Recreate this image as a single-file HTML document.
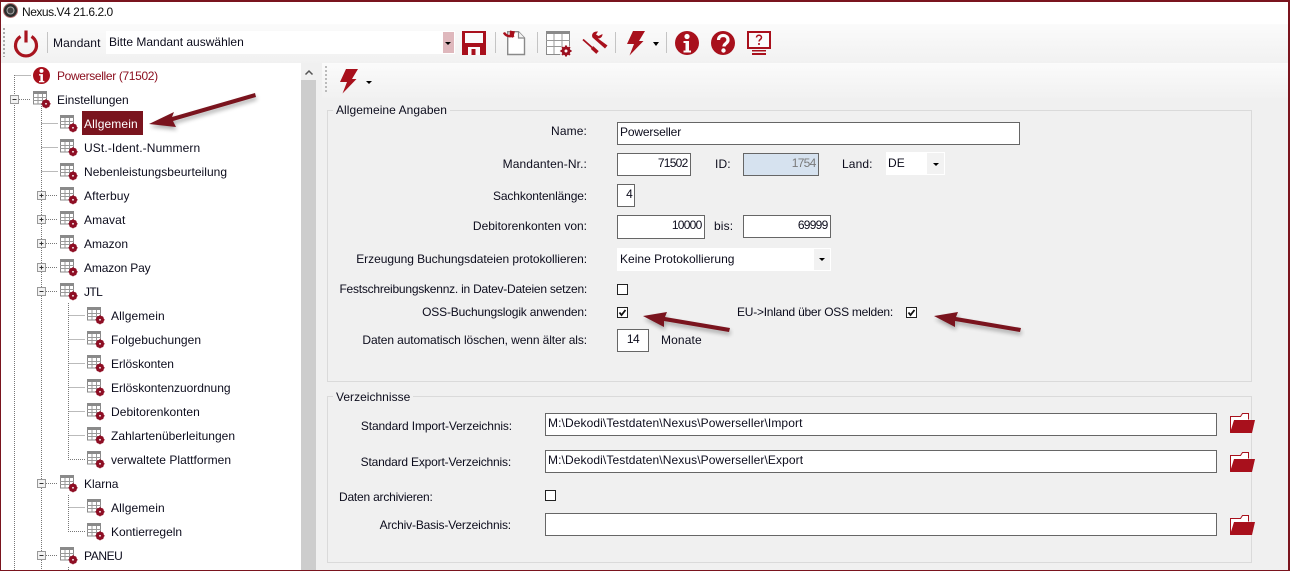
<!DOCTYPE html>
<html lang="de"><head><meta charset="utf-8"><title>Nexus.V4</title>
<style>
*{box-sizing:border-box}
html,body{margin:0;padding:0}
body{width:1290px;height:571px;overflow:hidden;position:relative;background:#f0f0f0;font:12px "Liberation Sans",sans-serif;color:#0c0c1c}
.a{position:absolute}
.t{position:absolute;white-space:nowrap;line-height:14px;height:14px;letter-spacing:.12px}
.r{text-align:right}
.i{position:absolute;background:#fff;border:1px solid #666;border-width:1.5px;line-height:19px;padding:0 2px;white-space:nowrap;letter-spacing:.1px}
.i.n{text-align:right;letter-spacing:-.75px;padding-right:2.500px}
.c{position:absolute;background:#fff}
.ck{position:absolute;width:11px;height:11px;background:#fff;border:1px solid #222}
.ar{position:absolute;width:0;height:0;border-left:3px solid transparent;border-right:3px solid transparent;border-top:3px solid #000}
.sep{position:absolute;width:1px;background:#c4c4c4;top:32px;height:21px}
.g{position:absolute;border:1px solid #dadada;left:327px;width:925px}
.l{position:absolute;background:#f0f0f0;padding:0 3px}
svg{position:absolute;overflow:visible}
</style></head><body>
<svg width="0" height="0" style="left:0;top:0"><defs>
<symbol id="tb" viewBox="0 0 18 18" overflow="visible">
<rect x="0.500" y="0.500" width="13" height="12.500" fill="#fff" stroke="#8a8a8a"/><path d="M0 .5h14v2.500H0z" fill="#8a8a8a"/><path d="M5 3v10M9.500 3v10M0 6.500h14M0 9.500h14" stroke="#999" fill="none"/><circle cx="13" cy="12.800" r="2.500" fill="#fff" stroke="#8e0e24" stroke-width="3.200"/><path d="M13 8.300v1.500M13 15.800v1.500M8.500 12.800h1.500M16 12.800h1.500M9.900 9.700l1 1M15.100 14.900l1 1M16.100 9.700l-1 1M10.900 14.900l-1 1" stroke="#8e0e24" stroke-width="1.500"/></symbol>
<symbol id="fo" viewBox="0 0 25 20"><path d="M.5 19.500V3.500h10l2-3h6v6" fill="#fff" stroke="#a8101c"/><path d="M4 7h21l-3 13H0z" fill="#a8101c"/></symbol>
<symbol id="bo" viewBox="0 0 18 25"><path d="M6 0H18L12 10H16.500L2.500 24.500L7 13H0Z" fill="#a8101c"/></symbol>
<filter id="sh" x="-20%" y="-50%" width="140%" height="200%"><feGaussianBlur stdDeviation="2"/></filter>
</defs></svg>

<!-- title -->
<div class="a" style="left:0;top:0;width:1290px;height:24px;background:#fff"></div>
<svg style="left:3px;top:3px" width="15" height="15" viewBox="0 0 15 15"><circle cx="7.500" cy="7.500" r="7" fill="#2c2c2c" stroke="#b77"/><circle cx="7.500" cy="7.500" r="3.500" fill="#444" stroke="#aaa"/></svg>
<div class="t" style="left:22px;top:5px;color:#111;letter-spacing:-.47px">Nexus.V4 21.6.2.0</div>

<!-- toolbar -->
<div class="a" style="left:0;top:24px;width:1290px;height:39px;background:linear-gradient(#fbfbfb,#f1f1f1)"></div>
<div class="a" style="left:3px;top:28px;width:2px;height:29px;background:repeating-linear-gradient(#aaa 0 2px,transparent 2px 4px)"></div>
<svg style="left:13px;top:30px" width="26" height="26" viewBox="0 0 26 26"><path d="M7.500 6.500a10.500 10.500 0 1 0 11 0" fill="none" stroke="#a8141f" stroke-width="3.200"/><path d="M13 .5v12" stroke="#a8141f" stroke-width="3.200" fill="none"/></svg>
<div class="sep" style="left:47px"></div>
<div class="t" style="left:53px;top:36px">Mandant</div>
<div class="c" style="left:106px;top:31px;width:349px;height:23px"></div>
<div class="t" style="left:109px;top:35px;letter-spacing:0">Bitte Mandant auswählen</div>
<div class="a" style="left:443px;top:32px;width:11px;height:21px;background:#dfb8bd"></div>
<div class="ar" style="left:445px;top:42px"></div>
<svg style="left:462px;top:31px" width="24" height="24" viewBox="0 0 24 24"><path d="M0 0h24v24H0z" fill="#a8101c"/><path d="M3 2h18v10H3z" fill="#fbfbfb"/><path d="M6 16h12v8H6z" fill="#fbfbfb"/><path d="M9.500 18h4v6h-4z" fill="#a8101c"/></svg>
<div class="sep" style="left:495px"></div>
<svg style="left:503px;top:30px" width="23" height="26" viewBox="0 0 23 26"><path d="M4.700 1.700H15.500L21.500 8V24.500H4.700Z" fill="#fff" stroke="#8a8a8a" stroke-width="1.400"/><path d="M15.500 1.700V8H21.500" fill="#f4f4f4" stroke="#8a8a8a" stroke-width="1.200"/><path d="M1 2.500C2.500 6 7 7 11 5.500" fill="none" stroke="#a8101c" stroke-width="2.400"/><path d="M7 .5L12 1.500L10 8L6.500 5Z" fill="#a8101c"/></svg>
<div class="sep" style="left:537px"></div>
<svg style="left:546px;top:31px" width="28" height="27" viewBox="0 0 28 27"><rect x=".5" y=".5" width="23" height="23" fill="#fff" stroke="#8a8a8a"/><path d="M0 0h24v3H0z" fill="#8a8a8a"/><path d="M8 3v20M16 3v20M0 9.500h24M0 15.500h24" stroke="#999"/><circle cx="20" cy="20.500" r="6.500" fill="#f6f6f6"/><circle cx="20" cy="20" r="3" fill="#fbfbfb" stroke="#9c1020" stroke-width="3"/><path d="M20 14.500v2M20 23.500v2M14.500 20h2M23.500 20h2M16.100 16.100l1.400 1.400M22.500 22.500l1.400 1.400M23.900 16.100l-1.400 1.400M17.500 22.500l-1.400 1.400" stroke="#9c1020" stroke-width="2"/></svg>
<svg style="left:582px;top:31px" width="26" height="25" viewBox="0 0 26 25"><path d="M16 .5C11.500 0 9 3 10.500 6.500L23 17.500L25.500 14.500L16 7.500C18.500 7.500 20.500 6 20.500 3L16.500 5L14 3.500Z" fill="#a8101c"/><path d="M1 8.500L10 16.500" stroke="#a8101c" stroke-width="1.800" fill="none"/><path d="M10 16.500L15.500 21.500" stroke="#a8101c" stroke-width="3.600" fill="none"/></svg>
<div class="sep" style="left:615px"></div>
<svg style="left:627px;top:31px" width="18" height="25"><use href="#bo" width="18" height="25"/></svg>
<div class="ar" style="left:653px;top:42px;border-width:4px 3.500px 0"></div>
<div class="sep" style="left:666px"></div>
<svg style="left:675px;top:31px" width="24" height="24" viewBox="0 0 24 24"><circle cx="12" cy="12" r="12" fill="#a8101c"/><circle cx="12" cy="5.500" r="2.600" fill="#fbfbfb"/><path d="M8.500 10h5.500v9.500h2v2H8.500v-2h2v-7.500h-2z" fill="#fbfbfb"/></svg>
<svg style="left:711px;top:31px" width="24" height="24" viewBox="0 0 24 24"><circle cx="12" cy="12" r="12" fill="#a8101c"/><path d="M7.500 9c0-6 9.500-6 9.500 0 0 3.500-4 3.500-4 6.500" fill="none" stroke="#fbfbfb" stroke-width="3.200"/><circle cx="12.500" cy="19.500" r="2.200" fill="#fbfbfb"/></svg>
<svg style="left:747px;top:31px" width="24" height="24" viewBox="0 0 24 24"><rect x="1" y="1" width="22" height="16" fill="#fbfbfb" stroke="#a8101c" stroke-width="2"/><path d="M5 19h14v1.500H5zM5 22h14v2H5z" fill="#a8101c"/><path d="M9.500 6.500c0-3 5-3 5 0 0 2-2.500 2-2.500 4" fill="none" stroke="#a8101c" stroke-width="1.500"/><path d="M11.200 12h1.600v2h-1.600z" fill="#a8101c"/></svg>

<!-- tree -->
<div class="a" style="left:1px;top:63px;width:300px;height:508px;background:#fff"></div>
<div class="a" style="left:301px;top:63px;width:15px;height:508px;background:#cdcdcd"></div>
<div class="a" style="left:301px;top:63px;width:15px;height:17px;background:#f0f0f0"></div>
<svg style="left:305px;top:70px" width="8" height="5"><path d="M.5 4.500L4 1l3.500 3.500" fill="none" stroke="#555" stroke-width="1.500"/></svg>

<svg style="left:0;top:0" width="110" height="571" fill="none" stroke="#777" stroke-dasharray="1 1">
<path d="M14.500 75V571M14.500 75.500H31M19 99.500H31M41.500 104V571M41.500 123.500H58M41.500 147.500H58M41.500 171.500H58M46 195.500H58M46 219.500H58M46 243.500H58M46 267.500H58M46 291.500H58M46 483.500H58M46 555.500H58M68.500 303V459.500H85M68.500 315.500H85M68.500 339.500H85M68.500 363.500H85M68.500 387.500H85M68.500 411.500H85M68.500 435.500H85M68.500 495V531.500H85M68.500 507.500H85M68.500 567V571"/>
</svg>
<svg style="left:0;top:0" width="60" height="571">
<g fill="#f2f2f2" stroke="#999"><rect x="10.500" y="95.500" width="8" height="8"/><rect x="37.500" y="191.500" width="8" height="8"/><rect x="37.500" y="215.500" width="8" height="8"/><rect x="37.500" y="239.500" width="8" height="8"/><rect x="37.500" y="263.500" width="8" height="8"/><rect x="37.500" y="287.500" width="8" height="8"/><rect x="37.500" y="479.500" width="8" height="8"/><rect x="37.500" y="551.500" width="8" height="8"/></g>
<path d="M12.500 99.500h4M39.500 195.500h4M39.500 219.500h4M39.500 243.500h4M39.500 267.500h4M39.500 291.500h4M39.500 483.500h4M39.500 555.500h4M41.500 193.500v4M41.500 217.500v4M41.500 241.500v4M41.500 265.500v4" stroke="#333" fill="none"/>
</svg>

<svg style="left:33px;top:67px" width="17" height="17" viewBox="0 0 24 24"><circle cx="12" cy="12" r="12" fill="#a8101c"/><circle cx="12" cy="5.500" r="2.800" fill="#fff"/><path d="M8.500 10h5.500v9.500h2v2H8.500v-2h2v-7.500h-2z" fill="#fff"/></svg>
<svg style="left:33px;top:91px" width="18" height="18"><use href="#tb" width="18" height="18"/></svg>
<svg style="left:60px;top:115px" width="18" height="18"><use href="#tb" width="18" height="18"/></svg>
<svg style="left:60px;top:139px" width="18" height="18"><use href="#tb" width="18" height="18"/></svg>
<svg style="left:60px;top:163px" width="18" height="18"><use href="#tb" width="18" height="18"/></svg>
<svg style="left:60px;top:187px" width="18" height="18"><use href="#tb" width="18" height="18"/></svg>
<svg style="left:60px;top:211px" width="18" height="18"><use href="#tb" width="18" height="18"/></svg>
<svg style="left:60px;top:235px" width="18" height="18"><use href="#tb" width="18" height="18"/></svg>
<svg style="left:60px;top:259px" width="18" height="18"><use href="#tb" width="18" height="18"/></svg>
<svg style="left:60px;top:283px" width="18" height="18"><use href="#tb" width="18" height="18"/></svg>
<svg style="left:87px;top:307px" width="18" height="18"><use href="#tb" width="18" height="18"/></svg>
<svg style="left:87px;top:331px" width="18" height="18"><use href="#tb" width="18" height="18"/></svg>
<svg style="left:87px;top:355px" width="18" height="18"><use href="#tb" width="18" height="18"/></svg>
<svg style="left:87px;top:379px" width="18" height="18"><use href="#tb" width="18" height="18"/></svg>
<svg style="left:87px;top:403px" width="18" height="18"><use href="#tb" width="18" height="18"/></svg>
<svg style="left:87px;top:427px" width="18" height="18"><use href="#tb" width="18" height="18"/></svg>
<svg style="left:87px;top:451px" width="18" height="18"><use href="#tb" width="18" height="18"/></svg>
<svg style="left:60px;top:475px" width="18" height="18"><use href="#tb" width="18" height="18"/></svg>
<svg style="left:87px;top:499px" width="18" height="18"><use href="#tb" width="18" height="18"/></svg>
<svg style="left:87px;top:523px" width="18" height="18"><use href="#tb" width="18" height="18"/></svg>
<svg style="left:60px;top:547px" width="18" height="18"><use href="#tb" width="18" height="18"/></svg>

<div class="t" style="left:57px;top:69px;color:#8c1020;letter-spacing:-.35px">Powerseller (71502)</div>
<div class="t" style="left:57px;top:93px;letter-spacing:-.03px">Einstellungen</div>
<div class="a" style="left:82px;top:111px;width:61px;height:24px;background:#7a141e"></div>
<div class="t" style="left:84px;top:117px;color:#fff">Allgemein</div>
<div class="t" style="left:84px;top:141px">USt.-Ident.-Nummern</div>
<div class="t" style="left:84px;top:165px;letter-spacing:.04px">Nebenleistungsbeurteilung</div>
<div class="t" style="left:84px;top:189px">Afterbuy</div>
<div class="t" style="left:84px;top:213px">Amavat</div>
<div class="t" style="left:84px;top:237px;letter-spacing:0">Amazon</div>
<div class="t" style="left:84px;top:261px;letter-spacing:-.15px">Amazon Pay</div>
<div class="t" style="left:84px;top:285px;letter-spacing:-.6px">JTL</div>
<div class="t" style="left:111px;top:309px">Allgemein</div>
<div class="t" style="left:111px;top:333px;letter-spacing:.05px">Folgebuchungen</div>
<div class="t" style="left:111px;top:357px;letter-spacing:-.05px">Erlöskonten</div>
<div class="t" style="left:111px;top:381px;letter-spacing:-.03px">Erlöskontenzuordnung</div>
<div class="t" style="left:111px;top:405px;letter-spacing:.05px">Debitorenkonten</div>
<div class="t" style="left:111px;top:429px;letter-spacing:.03px">Zahlartenüberleitungen</div>
<div class="t" style="left:111px;top:453px;letter-spacing:.03px">verwaltete Plattformen</div>
<div class="t" style="left:84px;top:477px;letter-spacing:-.05px">Klarna</div>
<div class="t" style="left:111px;top:501px">Allgemein</div>
<div class="t" style="left:111px;top:525px;letter-spacing:-.03px">Kontierregeln</div>
<div class="t" style="left:84px;top:549px;letter-spacing:-.4px">PANEU</div>

<!-- right toolbar -->
<div class="a" style="left:322px;top:63px;width:968px;height:35px;background:linear-gradient(#fbfbfb,#f1f1f1)"></div>
<div class="a" style="left:325px;top:66px;width:2px;height:27px;background:repeating-linear-gradient(#bbb 0 2px,transparent 2px 4px)"></div>
<svg style="left:340px;top:69px" width="18" height="25"><use href="#bo" width="18" height="25"/></svg>
<div class="ar" style="left:366px;top:81px;border-width:3px 3px 0"></div>

<!-- group 1 -->
<div class="g" style="top:110px;height:272px"></div>
<div class="l t" style="left:333px;top:103px;letter-spacing:.05px">Allgemeine Angaben</div>
<div class="t r" style="left:387px;width:200px;top:124px">Name:</div>
<div class="i" style="left:617px;top:122px;width:403px;height:23px;letter-spacing:-.15px">Powerseller</div>
<div class="t r" style="left:387px;width:200px;top:157px">Mandanten-Nr.:</div>
<div class="i n" style="left:617px;top:153px;width:74px;height:23px">71502</div>
<div class="t" style="left:715px;top:157px">ID:</div>
<div class="i n" style="left:743px;top:153px;width:76px;height:23px;background:#d6e2ef;color:#7a7a7a">1754</div>
<div class="t" style="left:842px;top:157px">Land:</div>
<div class="c" style="left:886px;top:152px;width:59px;height:23px"></div>
<div class="a" style="left:927px;top:153px;width:17px;height:21px;background:#f2f2f2"></div>
<div class="t" style="left:888px;top:156px">DE</div>
<div class="ar" style="left:933px;top:163px"></div>
<div class="t r" style="left:387px;width:200px;top:189px;letter-spacing:-.13px">Sachkontenlänge:</div>
<div class="i n" style="left:617px;top:184px;width:18px;height:23px;padding:0 2px">4</div>
<div class="t r" style="left:387px;width:200px;top:219px;letter-spacing:0">Debitorenkonten von:</div>
<div class="i n" style="left:617px;top:215px;width:88px;height:24px">10000</div>
<div class="t" style="left:714px;top:219px">bis:</div>
<div class="i n" style="left:743px;top:215px;width:88px;height:23px">69999</div>
<div class="t r" style="left:287px;width:300px;top:252px;letter-spacing:-.05px">Erzeugung Buchungsdateien protokollieren:</div>
<div class="c" style="left:617px;top:248px;width:214px;height:23px"></div>
<div class="a" style="left:814px;top:249px;width:16px;height:21px;background:#f2f2f2"></div>
<div class="t" style="left:620px;top:252px;letter-spacing:.02px">Keine Protokollierung</div>
<div class="ar" style="left:819px;top:258px"></div>
<div class="t r" style="left:287px;width:300px;top:282px;letter-spacing:-.23px">Festschreibungskennz. in Datev-Dateien setzen:</div>
<div class="ck" style="left:617px;top:284px"></div>
<div class="t r" style="left:287px;width:300px;top:305px;letter-spacing:-.17px">OSS-Buchungslogik anwenden:</div>
<div class="ck" style="left:617px;top:307px"></div>
<svg style="left:617px;top:307px" width="11" height="11"><path d="M2.500 5.500l2 2.500 4-5" fill="none" stroke="#111" stroke-width="1.800"/></svg>
<div class="t" style="left:737px;top:305px;letter-spacing:-.24px">EU-&gt;Inland über OSS melden:</div>
<div class="ck" style="left:906px;top:307px"></div>
<svg style="left:906px;top:307px" width="11" height="11"><path d="M2.500 5.500l2 2.500 4-5" fill="none" stroke="#111" stroke-width="1.800"/></svg>
<div class="t r" style="left:287px;width:300px;top:333px;letter-spacing:-.1px">Daten automatisch löschen, wenn älter als:</div>
<div class="i" style="left:617px;top:329px;width:32px;height:23px;text-align:center;letter-spacing:-.5px">14</div>
<div class="t" style="left:661px;top:333px">Monate</div>

<!-- group 2 -->
<div class="g" style="top:396px;height:167px"></div>
<div class="l t" style="left:333px;top:390px;letter-spacing:.02px">Verzeichnisse</div>
<div class="t r" style="left:212px;width:300px;top:419px;letter-spacing:-.13px">Standard Import-Verzeichnis:</div>
<div class="i" style="left:545px;top:413px;width:672px;height:23px">M:\Dekodi\Testdaten\Nexus\Powerseller\Import</div>
<svg style="left:1230px;top:413px" width="25" height="20"><use href="#fo" width="25" height="20"/></svg>
<div class="t r" style="left:211px;width:300px;top:455px;letter-spacing:-.18px">Standard Export-Verzeichnis:</div>
<div class="i" style="left:545px;top:450px;width:672px;height:23px">M:\Dekodi\Testdaten\Nexus\Powerseller\Export</div>
<svg style="left:1230px;top:452px" width="25" height="20"><use href="#fo" width="25" height="20"/></svg>
<div class="t" style="left:339px;top:490px;letter-spacing:-.21px">Daten archivieren:</div>
<div class="ck" style="left:545px;top:490px"></div>
<div class="t r" style="left:211px;width:300px;top:518px;letter-spacing:-.16px">Archiv-Basis-Verzeichnis:</div>
<div class="i" style="left:545px;top:513px;width:672px;height:23px"></div>
<svg style="left:1230px;top:515px" width="25" height="20"><use href="#fo" width="25" height="20"/></svg>

<!-- arrows -->
<svg style="left:0;top:0" width="1290" height="571">
<g fill="#000" opacity=".3" filter="url(#sh)" transform="translate(1 3)">
<path d="M149 124L174 112L172 117L255 93L256 97L173 121L176 127Z"/>
<path d="M643 316L667 312L665 317L730 328L729 332L664 321L664 327Z"/>
<path d="M934 316L958 312L956 317L1021 328L1020 332L955 321L955 327Z"/>
</g>
<g fill="#7a141e">
<path d="M149 124L174 112L172 117L255 93L256 97L173 121L176 127Z"/>
<path d="M643 316L667 312L665 317L730 328L729 332L664 321L664 327Z"/>
<path d="M934 316L958 312L956 317L1021 328L1020 332L955 321L955 327Z"/>
</g>
</svg>

<!-- window border -->
<div class="a" style="left:0;top:0;width:1290px;height:2px;background:#7a141e"></div>
<div class="a" style="left:0;top:0;width:1px;height:571px;background:#7a141e"></div>
<div class="a" style="left:1288px;top:0;width:2px;height:571px;background:#7a141e"></div>
<div class="a" style="left:0;top:570px;width:1290px;height:1px;background:#7a141e"></div>
</body></html>
